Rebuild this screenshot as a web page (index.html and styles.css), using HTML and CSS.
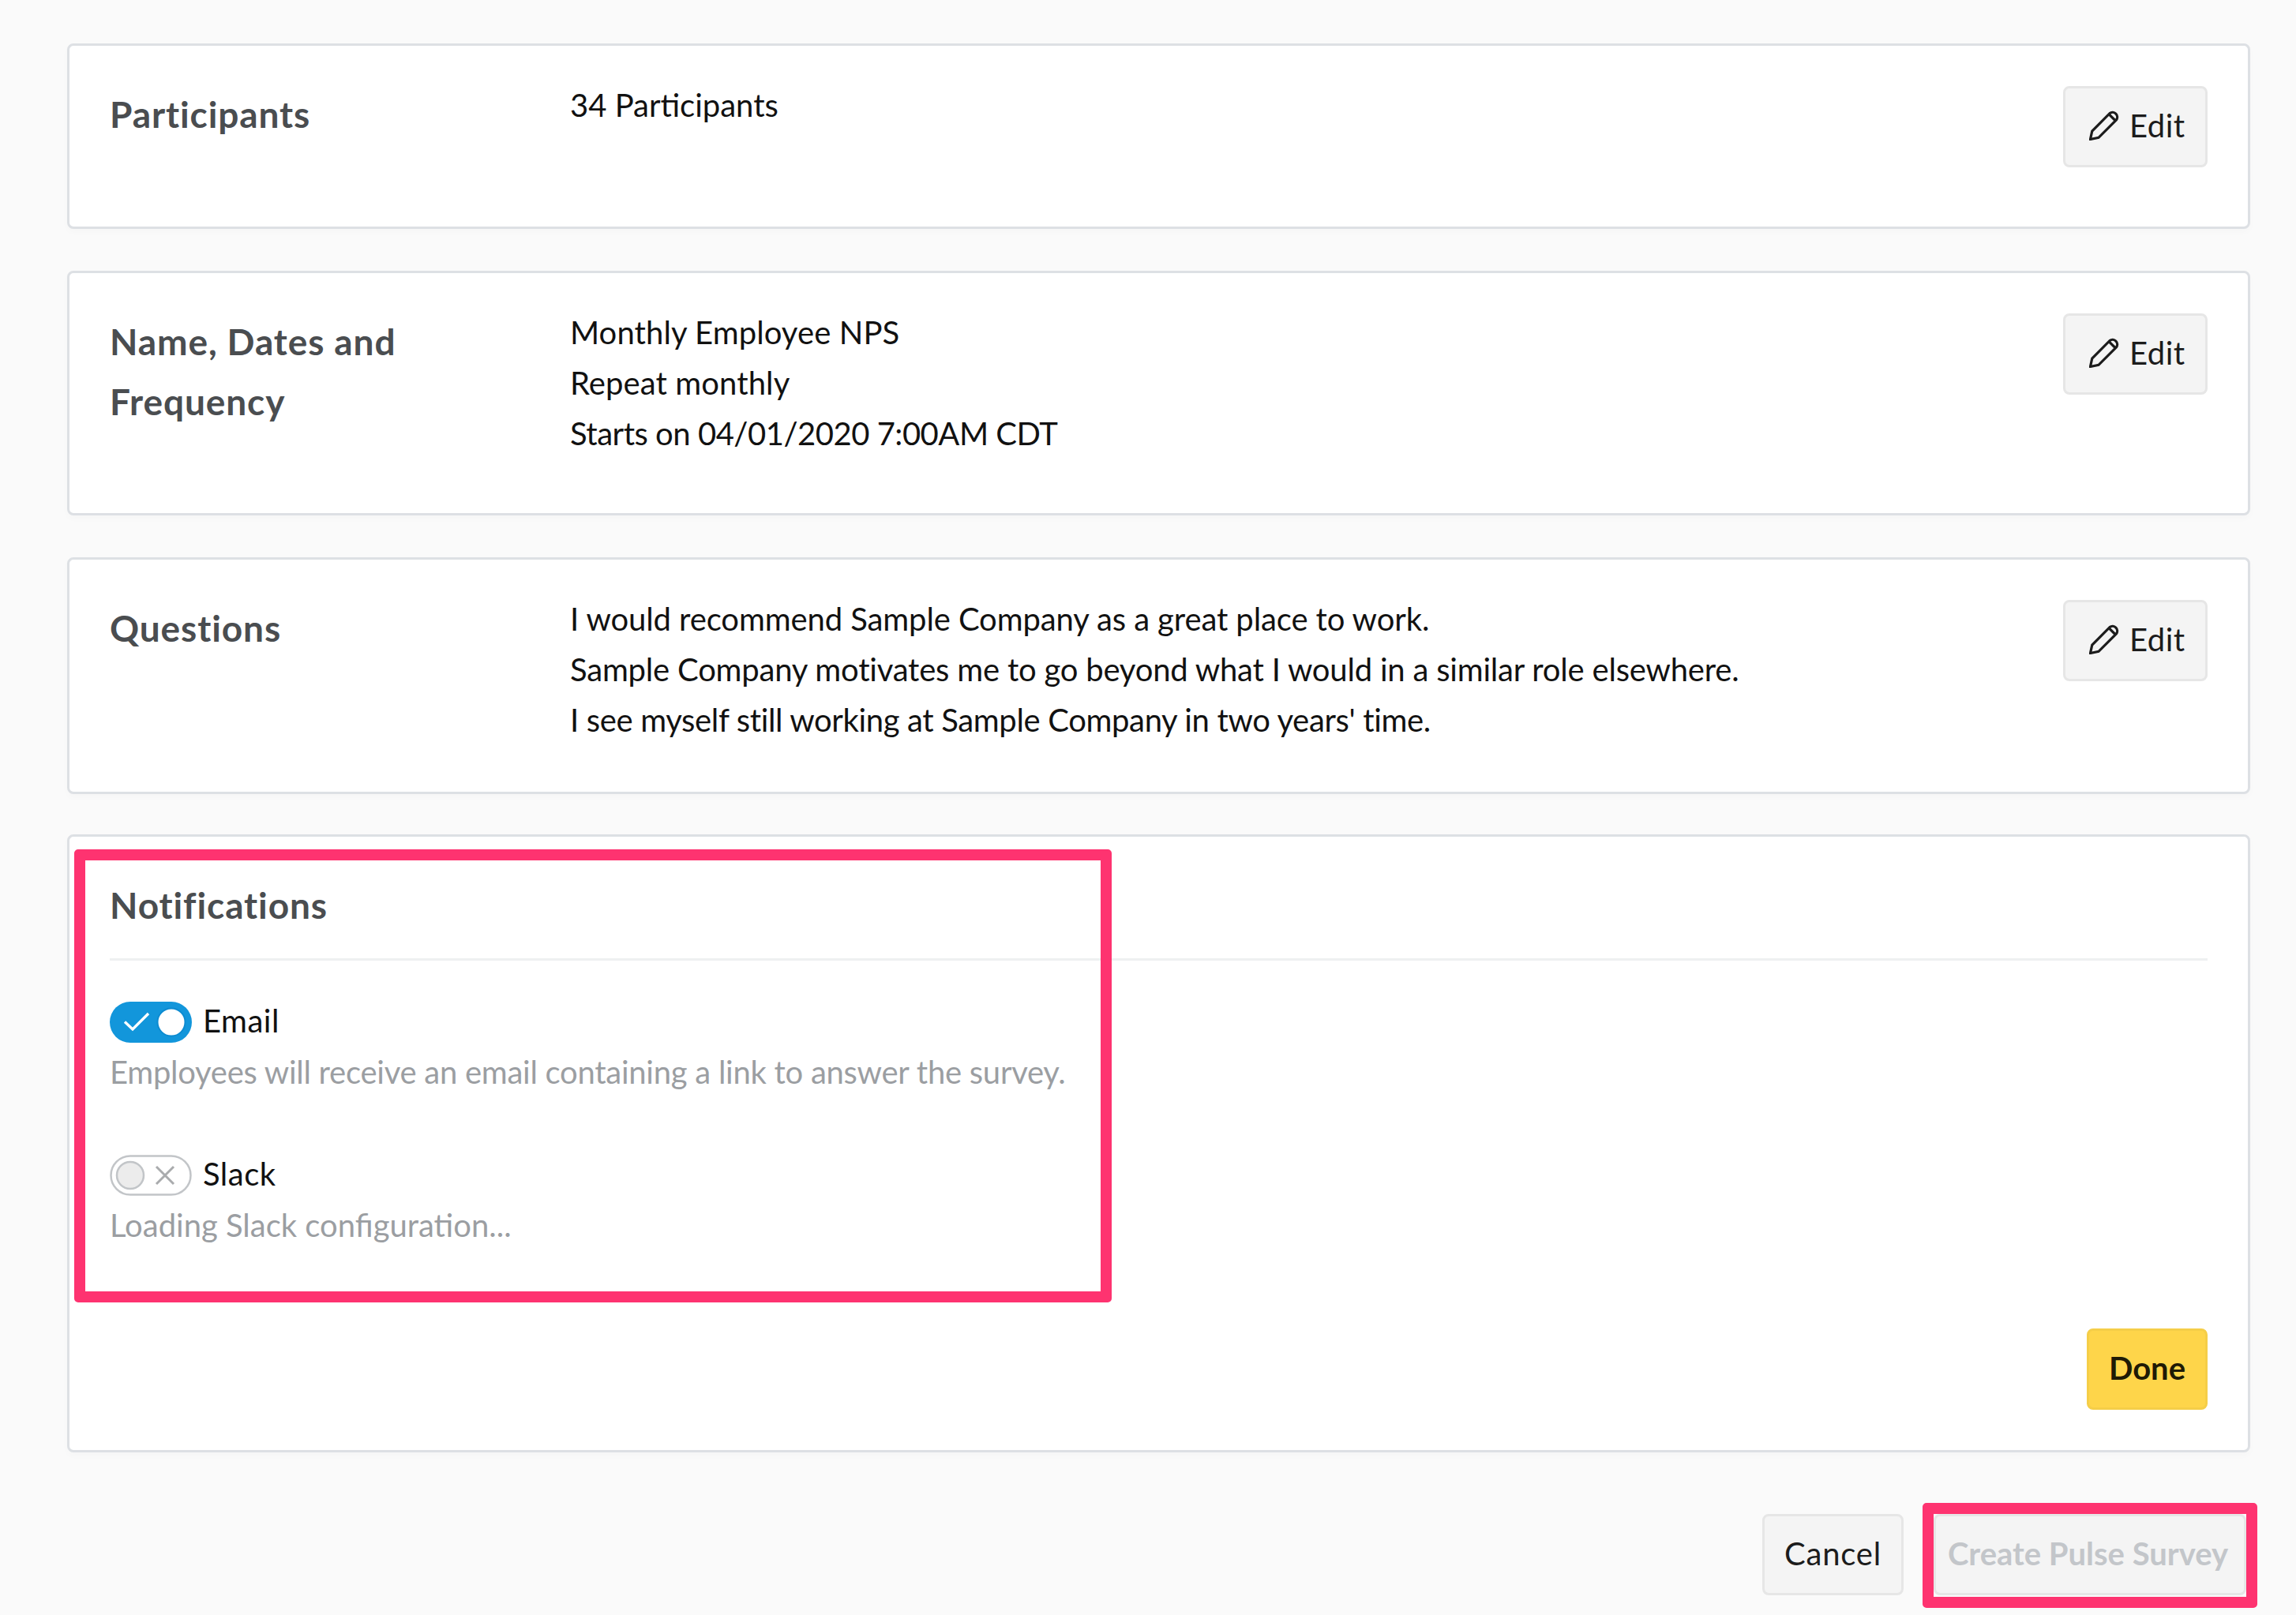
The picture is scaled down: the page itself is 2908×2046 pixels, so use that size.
FILE: index.html
```html
<!DOCTYPE html>
<html lang="en">
<head>
<meta charset="utf-8">
<title>Create Pulse Survey</title>
<link rel="stylesheet" href="styles.css">
</head>
<body>
<main class="page">
  <section class="card card-participants">
    <h2 class="card-title">Participants</h2>
    <div class="card-values"><p>34 Participants</p></div>
    <button class="btn btn-edit"><svg class="pencil" viewBox="0 0 38 38"><path d="M1.5 36.5 3.8 26 26 3.6a6 6 0 0 1 8.4 8.4L12 34.4Z M25 4.6 33.4 13"/></svg><span>Edit</span></button>
  </section>
  <section class="card card-dates">
    <h2 class="card-title">Name, Dates and Frequency</h2>
    <div class="card-values"><p class="wide">Monthly Employee NPS</p><p class="wide">Repeat monthly</p><p class="dates">Starts on 04/01/2020 7:00AM CDT</p></div>
    <button class="btn btn-edit"><svg class="pencil" viewBox="0 0 38 38"><path d="M1.5 36.5 3.8 26 26 3.6a6 6 0 0 1 8.4 8.4L12 34.4Z M25 4.6 33.4 13"/></svg><span>Edit</span></button>
  </section>
  <section class="card card-questions">
    <h2 class="card-title">Questions</h2>
    <div class="card-values"><p class="tight-1">I would recommend Sample Company as a great place to work.</p><p class="tight-2">Sample Company motivates me to go beyond what I would in a similar role elsewhere.</p><p class="tight-3">I see myself still working at Sample Company in two years' time.</p></div>
    <button class="btn btn-edit"><svg class="pencil" viewBox="0 0 38 38"><path d="M1.5 36.5 3.8 26 26 3.6a6 6 0 0 1 8.4 8.4L12 34.4Z M25 4.6 33.4 13"/></svg><span>Edit</span></button>
  </section>
  <section class="card card-notifications">
    <h2 class="card-title notif-title">Notifications</h2>
    <div class="option">
      <div class="option-row">
        <svg class="toggle" viewBox="0 0 104 52"><rect width="104" height="52" rx="26" fill="#1296db"/><circle cx="78" cy="26" r="17.5" fill="#fff" stroke="#0c8bd1" stroke-width="2"/><path d="M19 25.5 29 35 49 15" fill="none" stroke="#fff" stroke-width="3.4"/></svg>
        <span class="option-label">Email</span>
      </div>
      <p class="option-desc tight-desc">Employees will receive an email containing a link to answer the survey.</p>
    </div>
    <div class="option option-slack">
      <div class="option-row">
        <svg class="toggle" viewBox="0 0 104 52"><rect x="1.5" y="1.5" width="101" height="49" rx="24.5" fill="#fff" stroke="#c2c5c8" stroke-width="2.5"/><circle cx="26" cy="26" r="17" fill="#ececec" stroke="#c2c5c8" stroke-width="2.5"/><path d="M59 15 81 37M81 15 59 37" fill="none" stroke="#a9abad" stroke-width="3"/></svg>
        <span class="option-label">Slack</span>
      </div>
      <p class="option-desc">Loading Slack configuration...</p>
    </div>
    <div class="done-row"><button class="btn btn-done">Done</button></div>
  </section>
  <footer class="footer">
    <button class="btn btn-cancel">Cancel</button>
    <button class="btn btn-create">Create Pulse Survey</button>
  </footer>
  <div class="highlight highlight-notifications"></div>
  <div class="highlight highlight-create"></div>
</main>
</body>
</html>
```
FILE: styles.css
```css
* { box-sizing: border-box; }
html, body { margin: 0; background: #fafafa; }
body { font-family: Lato, "Liberation Sans", sans-serif; color: #111; }
.page { position: relative; width: 2908px; height: 2046px; padding: 55px 58px 0 85px; overflow: hidden; }
.card {
  display: flex; align-items: flex-start; background: #fff; border: 3px solid #dde0e4; border-radius: 8px;
  box-shadow: 0 4px 10px rgba(0,0,0,.02); padding: 51px 51px 0; margin-bottom: 54px;
}
.card-participants { height: 235px; margin-bottom: 53px; }
.card-dates { height: 310px; margin-bottom: 53px; }
.card-questions { height: 300px; margin-bottom: 51px; }
.card-notifications { display: block; height: 783px; margin-bottom: 78px; }
.card-title { margin: -2px 0 2px; width: 583px; flex: none; font-size: 46px; line-height: 76px; font-weight: 700; color: #4a4d50; padding-right: 150px; letter-spacing: .9px; }
.card-values { flex: 1; margin-top: -8px; font-size: 40px; line-height: 64px; }
.card-values p { margin: 0; }
.wide { letter-spacing: .1px; }
.dates { letter-spacing: -.48px; }
.tight-1 { letter-spacing: -.1px; }
.tight-2 { letter-spacing: -.2px; }
.tight-3 { letter-spacing: -.35px; }
.btn { font-family: inherit; font-size: 40px; height: 103px; border: 3px solid #e6e6e6; border-radius: 8px; background: #f4f4f4; color: #1c1c1c; padding: 0 0 4px; }
.btn-edit { display: flex; align-items: center; gap: 13px; width: 183px; flex: none; letter-spacing: .5px; padding-left: 30px; }
.pencil { width: 38px; height: 38px; fill: none; stroke: #1c1c1c; stroke-width: 3.2; }
.notif-title { width: auto; padding-right: 0; margin-bottom: 0; padding-bottom: 29px; border-bottom: 3px solid #eef0f1; }
.option { margin-top: 52px; }
.option-slack { margin-top: 73px; }
.option-row { display: flex; align-items: center; gap: 14px; height: 52px; }
.toggle { width: 104px; height: 52px; flex: none; }
.option-label { font-size: 40px; letter-spacing: .5px; margin-bottom: 4px; }
.option-desc { margin: 5px 0 0; font-size: 40px; line-height: 64px; color: #9b9ea2; }
.tight-desc { letter-spacing: -.26px; }
.done-row { display: flex; justify-content: flex-end; margin-top: 99px; }
.btn-done { width: 153px; background: #fed54a; border-color: #f5ce48; color: #1f1a05; font-weight: 700; }
.footer { display: flex; justify-content: flex-end; gap: 38px; margin-right: 5px; }
.btn-cancel { width: 179px; letter-spacing: .8px; }
.btn-create { width: 396px; color: #c3c6ca; font-weight: 700; padding-right: 5px; }
.highlight { position: absolute; border: 14px solid #fe3370; border-radius: 5px; pointer-events: none; }
.highlight-notifications { left: 94px; top: 1076px; width: 1314px; height: 574px; }
.highlight-create { left: 2435px; top: 1904px; width: 424px; height: 133px; }
```
